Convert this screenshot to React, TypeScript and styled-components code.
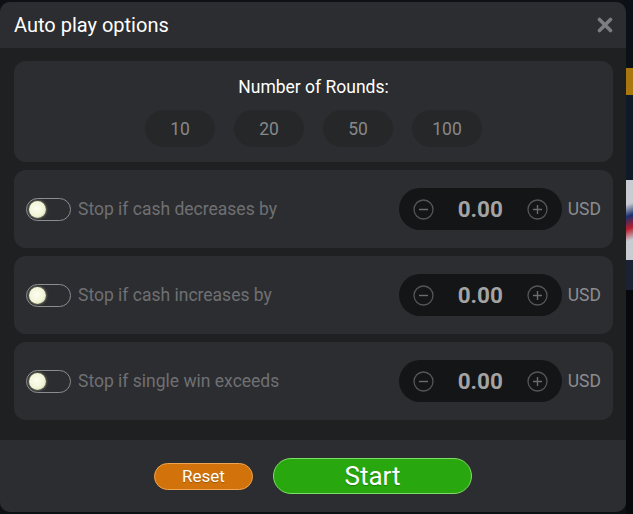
import styled, { createGlobalStyle } from "styled-components";

const Global = createGlobalStyle`
  html, body {
    margin: 0;
    padding: 0;
    background: #111315;
    font-family: Roboto, "Liberation Sans", sans-serif;
  }
`;

const Stage = styled.div`
  display: flex;
  width: 633px;
  height: 514px;
  overflow: hidden;
  background: #0d1115;
`;

const Modal = styled.section`
  width: 626px;
  margin: 2px 0;
  display: flex;
  flex-direction: column;
  border-radius: 10px;
  overflow: hidden;
  background: #1f2022;
`;

const Header = styled.header`
  height: 46px;
  display: flex;
  align-items: center;
  justify-content: space-between;
  padding: 0 13px 0 14px;
  background: #2c2d30;
`;

const Title = styled.h2`
  margin: 0;
  font-size: 20px;
  font-weight: 400;
  color: #ffffff;
`;

const Close = styled.button`
  border: none;
  background: none;
  padding: 0;
  width: 16px;
  height: 16px;
  display: flex;
  cursor: pointer;
`;

const Body = styled.div`
  flex: 1;
  display: flex;
  flex-direction: column;
  gap: 8px;
  padding: 13px 13px 20px 14px;
`;

const Card = styled.div<{ $tall?: boolean }>`
  background: #2c2d30;
  border-radius: 12px;
  height: ${(p) => (p.$tall ? "101px" : "78px")};
  box-sizing: border-box;
  display: flex;
  ${(p) =>
    p.$tall
      ? `flex-direction: column; align-items: center; padding-top: 16px;`
      : `align-items: center; padding: 0 12px;`}
`;

const CardTitle = styled.div`
  font-size: 17.5px;
  color: #ffffff;
  line-height: 21px;
`;

const Chips = styled.div`
  display: flex;
  gap: 19px;
  margin-top: 12px;
`;

const Chip = styled.button`
  width: 70px;
  height: 37px;
  border: none;
  border-radius: 19px;
  background: #262729;
  color: #87888b;
  font-family: inherit;
  font-size: 17.5px;
  cursor: pointer;
`;

const Toggle = styled.span`
  width: 45px;
  height: 23px;
  box-sizing: border-box;
  border: 1.5px solid #8c8d90;
  border-radius: 12px;
  display: flex;
  align-items: center;
  padding-left: 2px;
  flex-shrink: 0;
`;

const Knob = styled.span`
  width: 17px;
  height: 17px;
  border-radius: 50%;
  background: radial-gradient(circle at 45% 45%, #fdfef2 0%, #f1f4d6 55%, #b9bc92 100%);
  box-shadow: 0 0 3px rgba(240, 245, 200, 0.6);
`;

const Label = styled.span`
  margin-left: 7px;
  font-size: 17.5px;
  color: #6f7073;
  flex: 1;
`;

const Amount = styled.div`
  width: 163px;
  height: 42px;
  border-radius: 21px;
  background: #141516;
  display: flex;
  align-items: center;
  justify-content: space-between;
  padding: 0 14px;
  box-sizing: border-box;
`;

const Value = styled.span`
  font-size: 22.5px;
  font-weight: 700;
  color: #a3a3a4;
`;

const Currency = styled.span`
  margin-left: 6px;
  font-size: 17.5px;
  color: #8b8c8f;
`;

const Footer = styled.footer`
  height: 72px;
  display: flex;
  align-items: center;
  justify-content: center;
  gap: 20px;
  background: #2c2d30;
`;

const ActionButton = styled.button<{ $variant: "reset" | "start" }>`
  font-family: inherit;
  color: #ffffff;
  cursor: pointer;
  border-radius: 20px;
  box-sizing: border-box;
  padding: 0;
  ${(p) =>
    p.$variant === "reset"
      ? `width: 99px; height: 27px; font-size: 17px; background: #d2720a; border: 1.5px solid #f0a550;`
      : `width: 199px; height: 36px; font-size: 26px; background: #28a80e; border: 1.5px solid #7fdc66;`}
  text-shadow: 0 1px 1px rgba(0, 0, 0, 0.25);
`;

const Side = styled.div`
  flex: 1;
  display: flex;
  flex-direction: column;
  background: #0a0e13;
`;

const SideBlock = styled.div<{ $h: number; $bg: string }>`
  height: ${(p) => p.$h}px;
  background: ${(p) => p.$bg};
`;

const StepIcon = ({ plus }: { plus?: boolean }) => (
  <svg width="21" height="21" viewBox="0 0 21 21">
    <circle cx="10.5" cy="10.5" r="9.5" fill="none" stroke="#55565a" strokeWidth="1.3" />
    <line x1="6" y1="10.5" x2="15" y2="10.5" stroke="#6b6c70" strokeWidth="1.4" />
    {plus && <line x1="10.5" y1="6" x2="10.5" y2="15" stroke="#6b6c70" strokeWidth="1.4" />}
  </svg>
);

const rows = ["Stop if cash decreases by", "Stop if cash increases by", "Stop if single win exceeds"];

export default function App() {
  return (
    <>
      <Global />
      <Stage>
        <Modal>
          <Header>
            <Title>Auto play options</Title>
            <Close aria-label="close">
              <svg width="16" height="16" viewBox="0 0 16 16">
                <path d="M2.5 2.5 L13.5 13.5 M13.5 2.5 L2.5 13.5" stroke="#7b7d81" strokeWidth="3.6" strokeLinecap="round" />
              </svg>
            </Close>
          </Header>
          <Body>
            <Card $tall>
              <CardTitle>Number of Rounds:</CardTitle>
              <Chips>
                {[10, 20, 50, 100].map((n) => (
                  <Chip key={n}>{n}</Chip>
                ))}
              </Chips>
            </Card>
            {rows.map((r) => (
              <Card key={r}>
                <Toggle>
                  <Knob />
                </Toggle>
                <Label>{r}</Label>
                <Amount>
                  <StepIcon />
                  <Value>0.00</Value>
                  <StepIcon plus />
                </Amount>
                <Currency>USD</Currency>
              </Card>
            ))}
          </Body>
          <Footer>
            <ActionButton $variant="reset">Reset</ActionButton>
            <ActionButton $variant="start">Start</ActionButton>
          </Footer>
        </Modal>
        <Side>
          <SideBlock $h={68} $bg="#0b1117" />
          <SideBlock $h={27} $bg="#a8770f" />
          <SideBlock $h={85} $bg="#0f1a26" />
          <SideBlock $h={80} $bg="linear-gradient(160deg, #c8ccd2 0%, #c8ccd2 30%, #1c2f6b 45%, #b51e2e 60%, #c8ccd2 75%)" />
          <SideBlock $h={30} $bg="#1a2233" />
          <SideBlock $h={224} $bg="#07090c" />
        </Side>
      </Stage>
    </>
  );
}
